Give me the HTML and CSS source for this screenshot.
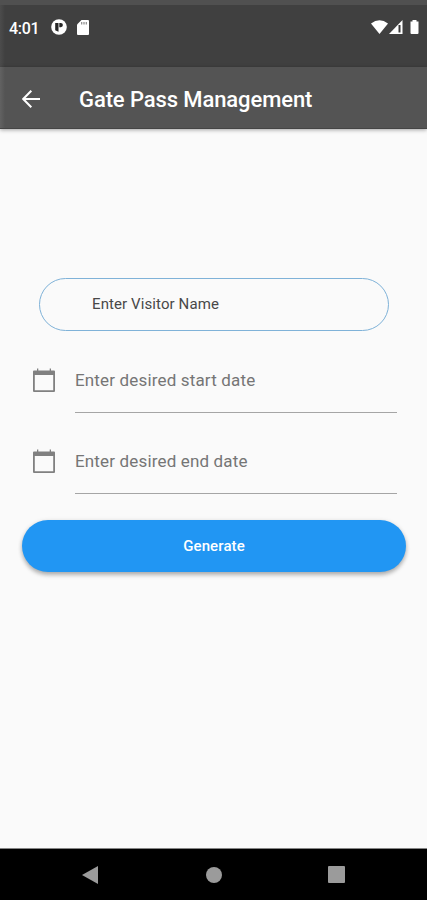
FILE: index.html
```html
<!DOCTYPE html>
<html lang="en">
<head>
<meta charset="utf-8">
<title>Gate Pass Management</title>
<link rel="stylesheet" href="styles.css">
</head>
<body>
<div class="screen">
  <div class="status">
    <span class="clock">4:01</span>
    <svg class="app-icon" width="16" height="16" viewBox="0 0 16 16"><circle cx="8" cy="8" r="7.800" fill="#fff"/><path d="M4.200 4h3.300v8.800l-3.300-1.500zM8.300 4h1.500a2 2 0 0 1 0 4.200H8.300z" fill="#262626"/></svg>
    <svg class="card-icon" width="12" height="15" viewBox="0 0 12 15"><path d="M4.500 0H11a1 1 0 0 1 1 1v13a1 1 0 0 1-1 1H1a1 1 0 0 1-1-1V4.500z" fill="#fff"/><path d="M4.700 2v2.400M7 2v2.400M9.300 2v2.400" stroke="#888" stroke-width="1.200"/></svg>
    <svg class="signals" width="50" height="16" viewBox="0 0 50 16"><path d="M0 4.500Q8.500-2.200 17 4.500L8.500 15z" fill="#fff"/><path d="M31.500 1v14H18z" fill="#fff"/><path d="M28.500 6v7.500" stroke="#383838" stroke-width="2"/><path d="M39.500 2.500h2V1h4v1.500h2V14a1 1 0 0 1-1 1h-6a1 1 0 0 1-1-1z" fill="#fff"/></svg>
  </div>
  <header class="appbar">
    <svg width="18" height="18" viewBox="0 0 18 18" fill="none" stroke="#fff" stroke-width="2"><path d="M18 9H1.500M9.300 .8 1.200 9l8.100 8.200"/></svg>
    <h1>Gate Pass Management</h1>
  </header>
  <main>
    <div class="name-field"><span>Enter Visitor Name</span></div>
    <div class="date-row">
      <svg width="22" height="25" viewBox="0 0 22 25"><path fill="#808080" fill-rule="evenodd" d="M4 .5h1.300V2.500h11.400V.5H18v2h3A1 1 0 0 1 22 3.500v19.500a1 1 0 0 1-1 1H1a1 1 0 0 1-1-1V3.500a1 1 0 0 1 1-1H4zM1.800 7v15.200h18.400V7z"/></svg>
      <div class="date-field"><span>Enter desired start date</span></div>
    </div>
    <div class="date-row">
      <svg width="22" height="25" viewBox="0 0 22 25"><path fill="#808080" fill-rule="evenodd" d="M4 .5h1.300V2.500h11.400V.5H18v2h3A1 1 0 0 1 22 3.500v19.500a1 1 0 0 1-1 1H1a1 1 0 0 1-1-1V3.500a1 1 0 0 1 1-1H4zM1.800 7v15.200h18.400V7z"/></svg>
      <div class="date-field"><span>Enter desired end date</span></div>
    </div>
    <button class="generate">Generate</button>
  </main>
  <nav class="navbar">
    <svg width="16" height="18" viewBox="0 0 16 18"><path d="M16 0v18L0 9z" fill="#9b9b9b"/></svg>
    <svg class="home" width="16" height="16" viewBox="0 0 16 16"><circle cx="8" cy="8" r="8" fill="#9b9b9b"/></svg>
    <svg width="17" height="17" viewBox="0 0 17 17"><rect width="17" height="17" rx="1" fill="#9b9b9b"/></svg>
  </nav>
</div>
</body>
</html>
```
FILE: styles.css
```css
* { box-sizing: border-box; }
body { margin: 0; font-family: Roboto, "Liberation Sans", sans-serif; }
svg { display: block; flex: none; }
.screen { width: 427px; height: 900px; display: flex; flex-direction: column; background: #fafafa; }
.status {
  height: 67px; flex: none; display: flex; align-items: flex-start;
  padding: 14px 7px 0 9px; border-top: 5px solid #505050;
  background: linear-gradient(90deg, #4c4c4c, #404040 5px);
  color: #fff;
}
.clock { width: 42px; padding-top: 1px; font-size: 16px; font-weight: 500; line-height: 18px; letter-spacing: -0.3px; }
.card-icon { margin-left: 10px; margin-top: 1px; }
.signals { margin-left: auto; margin-right: -1px; }
.appbar {
  height: 62px; flex: none; display: flex; align-items: center; gap: 39px; padding: 2px 0 0 22px;
  background: linear-gradient(90deg, #626262, #545454 5px);
  border-bottom: 1px solid #454545; box-shadow: 0 1px 4px rgba(0,0,0,.35);
}
h1 { margin: 0; padding-top: 1px; color: #fff; font-size: 22px; font-weight: 500; line-height: 27px; letter-spacing: -0.1px; white-space: nowrap; }
main { flex: 1; display: flex; flex-direction: column; padding: 149px 21px 0 22px; }
.name-field {
  height: 53px; margin: 0 17px; padding: 0 0 2px 52px; display: flex; align-items: center;
  border: 1.5px solid #7fb2d8; border-radius: 27px;
  color: #484848; font-size: 15px; line-height: 18px; letter-spacing: 0.1px;
}
.date-row { height: 63px; margin: 19px 9px 0 11px; display: flex; gap: 20px; padding-top: 18px; }
.date-row + .date-row { margin-top: 18px; }
.date-field { flex: 1; height: 45px; padding-top: 1px; border-bottom: 1px solid #a5a5a5; color: #757575; font-size: 17px; line-height: 23px; letter-spacing: 0.16px; }
.generate {
  height: 52px; margin: 26px 0 0; border: 0; border-radius: 26px; background: #2196f3;
  color: #fff; font: 500 15px/18px Roboto, sans-serif; letter-spacing: 0.1px; padding: 0;
  box-shadow: 0 3px 4px rgba(0,0,0,.25), 0 1px 5px rgba(0,0,0,.12);
}
.navbar {
  height: 52px; flex: none; display: flex; align-items: center; justify-content: space-between;
  padding: 0 82px; background: #000; border-top: 1px solid #858585;
}
.home { margin-left: 2px; }
```
